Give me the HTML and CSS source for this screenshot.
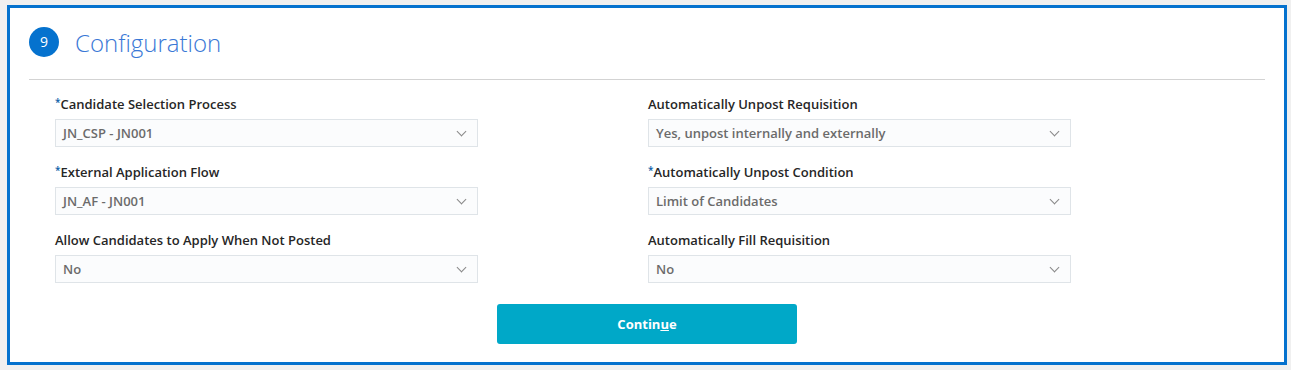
FILE: index.html
```html
<!DOCTYPE html>
<html lang="en">
<head>
    <meta charset="UTF-8">
    <title>Configuration</title>
    <link rel="stylesheet" href="styles.css">
</head>
<body>
<div class="panel">
    <div class="head">
        <span class="step">9</span>
        <h2 class="title">Configuration</h2>
    </div>
    <div class="rule"></div>

    <div class="form">
        <div class="field">
            <label><span class="req">*</span>Candidate Selection Process</label>
            <div class="select"><span>JN_CSP - JN001</span><i class="chev"></i></div>
        </div>
        <div class="field">
            <label>Automatically Unpost Requisition</label>
            <div class="select"><span>Yes, unpost internally and externally</span><i class="chev"></i></div>
        </div>
        <div class="field">
            <label><span class="req">*</span>External Application Flow</label>
            <div class="select"><span>JN_AF - JN001</span><i class="chev"></i></div>
        </div>
        <div class="field">
            <label><span class="req">*</span>Automatically Unpost Condition</label>
            <div class="select"><span>Limit of Candidates</span><i class="chev"></i></div>
        </div>
        <div class="field">
            <label>Allow Candidates to Apply When Not Posted</label>
            <div class="select"><span>No</span><i class="chev"></i></div>
        </div>
        <div class="field">
            <label>Automatically Fill Requisition</label>
            <div class="select"><span>No</span><i class="chev"></i></div>
        </div>
    </div>

    <div class="actions">
        <button class="btn">Contin<u>u</u>e</button>
    </div>
</div>
</body>
</html>
```

FILE: styles.css
```css
*{
    padding: 0;
    margin: 0;
    box-sizing: border-box;
}
body{
    background-color: #f0f0f0;
    padding: 5px 0 0 7px;
    font-family: "Open Sans", "Noto Sans", sans-serif;
    color: #161513;
}
.panel{
    width: 1280px;
    height: 360px;
    border: 3px solid #0572ce;
    background-color: #fff;
}
.head{
    display: flex;
    align-items: center;
    height: 71px;
    padding: 0 0 3px 19px;
}
.step{
    width: 30px;
    height: 30px;
    border-radius: 50%;
    background-color: #0572ce;
    color: #fff;
    font-size: 14px;
    line-height: 30px;
    text-align: center;
}
.title{
    margin-left: 16px;
    font-size: 24px;
    font-weight: 300;
    color: #3a78d6;
}
.rule{
    height: 1px;
    margin: 0 19px;
    background-color: #d3d3d3;
}
.form{
    display: grid;
    grid-template-columns: 423px 423px;
    column-gap: 170px;
    row-gap: 16px;
    padding: 15px 0 0 45px;
}
.field label{
    display: block;
    height: 24px;
    font-size: 13px;
    font-weight: 600;
    line-height: 18px;
    color: #262626;
}
.req{
    font-size: 10px;
    line-height: 0;
    vertical-align: 3px;
    color: #0a5ea8;
}
.select{
    display: flex;
    align-items: center;
    justify-content: space-between;
    height: 28px;
    padding: 0 12px 0 7px;
    border: 1px solid #dfe4e8;
    background-color: #fbfcfd;
    font-size: 13px;
    font-weight: 600;
    color: #6b6b6b;
}
.chev{
    width: 7px;
    height: 7px;
    border-right: 1px solid #888;
    border-bottom: 1px solid #888;
    transform: rotate(45deg);
    margin-top: -4px;
}
.actions{
    display: flex;
    justify-content: center;
    padding-top: 21px;
}
.btn{
    width: 300px;
    height: 40px;
    border: none;
    border-radius: 3px;
    background-color: #00a8c8;
    color: #fff;
    font-family: inherit;
    font-size: 13px;
    font-weight: 700;
}
```
